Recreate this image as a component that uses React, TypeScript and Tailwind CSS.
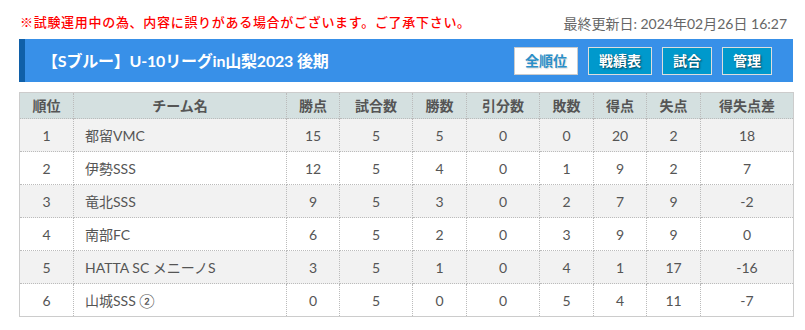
import React from "react";

const rows = [
  ["1", "都留VMC", "15", "5", "5", "0", "0", "20", "2", "18"],
  ["2", "伊勢SSS", "12", "5", "4", "0", "1", "9", "2", "7"],
  ["3", "竜北SSS", "9", "5", "3", "0", "2", "7", "9", "-2"],
  ["4", "南部FC", "6", "5", "2", "0", "3", "9", "9", "0"],
  ["5", "HATTA SC メニーノS", "3", "5", "1", "0", "4", "1", "17", "-16"],
  ["6", "山城SSS ②", "0", "5", "0", "0", "5", "4", "11", "-7"],
];

const heads = ["順位", "チーム名", "勝点", "試合数", "勝数", "引分数", "敗数", "得点", "失点", "得失点差"];
const widths = [54, 213, 53, 73, 54, 73, 54, 53, 54, 93];

export default function App() {
  return (
    <div
      className="w-[805px] h-[330px] bg-white text-[#555]"
      style={{ fontFamily: 'Lato, "Noto Sans CJK JP", sans-serif' }}
    >
      <div className="ml-[19px] w-[774px] pt-[13px]">
        <div className="flex items-center justify-between h-[20px]">
          <span className="text-[13px] tracking-[0.7px] text-[#ff0000] ml-[1px] font-medium">
            ※試験運用中の為、内容に誤りがある場合がございます。ご了承下さい。
          </span>
          <span className="text-[14px] text-[#666] mr-[6px]">最終更新日: 2024年02月26日 16:27</span>
        </div>
        <div className="mt-[6px] h-[43px] bg-[#3890e8] border-l-[6px] border-[#1060a8] flex items-center justify-between pl-[17px] pr-[21px]">
          <span className="text-white font-bold text-[16px] tracking-[-0.2px]">【Sブルー】U-10リーグin山梨2023 後期</span>
          <div className="flex gap-[10px]">
            <div className="h-[28px] px-[10px] bg-white border border-[#ccc] flex items-center text-[14px] font-bold text-[#2a8fc9] [text-shadow:1px_1px_1px_rgba(0,0,0,0.15)]">
              全順位
            </div>
            {["戦績表", "試合", "管理"].map((t) => (
              <div
                key={t}
                className="h-[28px] px-[10px] bg-[#0099cc] border border-[#ddd] flex items-center text-[14px] font-bold text-white [text-shadow:1px_1px_2px_rgba(0,0,0,0.6)]"
              >
                {t}
              </div>
            ))}
          </div>
        </div>
        <table className="mt-[10px] w-[774px] table-fixed border-collapse border border-[#ccc] text-[14px]">
          <colgroup>
            {widths.map((w, i) => (
              <col key={i} style={{ width: w }} />
            ))}
          </colgroup>
          <thead>
            <tr className="h-[26px] bg-[#d4e0e0]">
              {heads.map((h, i) => (
                <th
                  key={i}
                  className="font-bold text-[#555] text-center border-x border-dotted border-[#bbb]"
                >
                  {h}
                </th>
              ))}
            </tr>
          </thead>
          <tbody>
            {rows.map((r, ri) => (
              <tr key={ri} className={`h-[33px] ${ri % 2 === 0 ? "bg-[#f2f2f2]" : "bg-white"}`}>
                {r.map((c, ci) => (
                  <td
                    key={ci}
                    className={`border border-dotted border-[#bbb] ${ci === 1 ? "text-left pl-[11px]" : "text-center"}`}
                  >
                    {c}
                  </td>
                ))}
              </tr>
            ))}
          </tbody>
        </table>
      </div>
    </div>
  );
}
